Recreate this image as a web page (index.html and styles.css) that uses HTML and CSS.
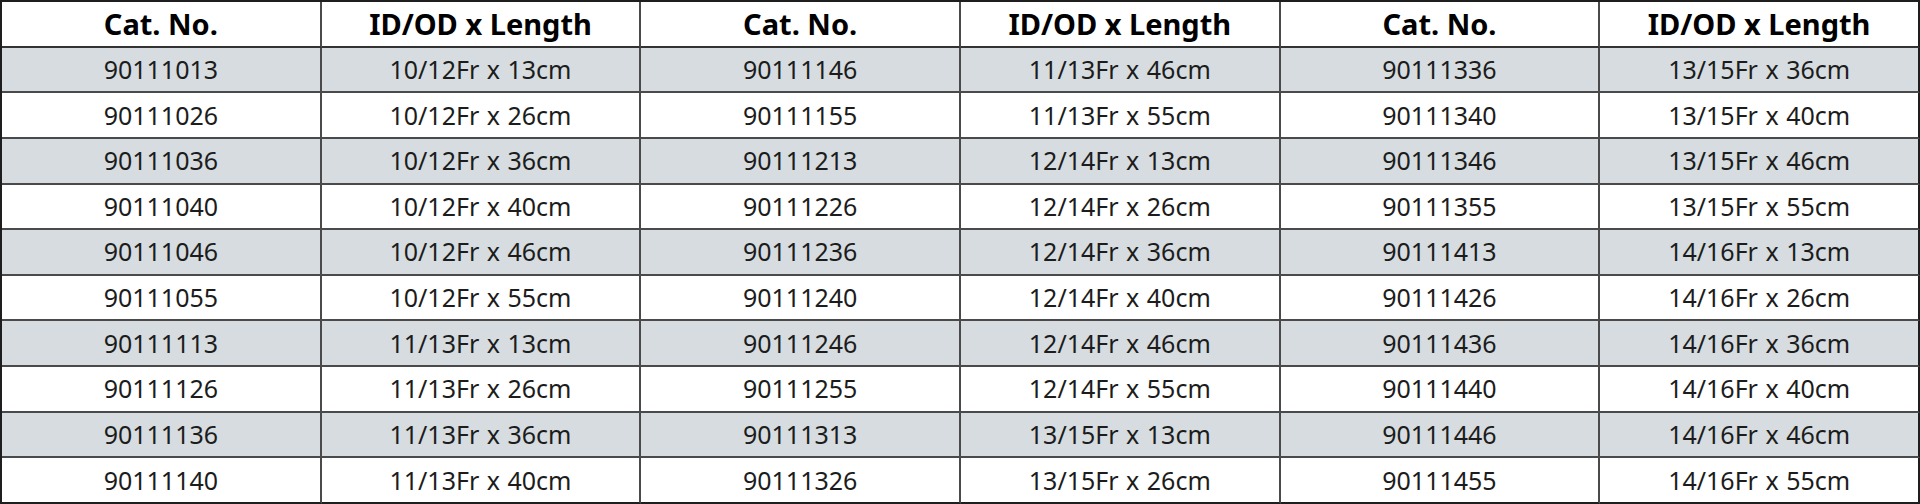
FILE: index.html
```html
<!DOCTYPE html>
<html lang="en">
<head>
<meta charset="utf-8">
<title>Catalog</title>
<link rel="stylesheet" href="styles.css">
</head>
<body>
<table class="cat">
<thead>
<tr><th>Cat. No.</th><th>ID/OD x Length</th><th>Cat. No.</th><th>ID/OD x Length</th><th>Cat. No.</th><th>ID/OD x Length</th></tr>
</thead>
<tbody>
<tr class="alt"><td>90111013</td><td>10/12Fr x 13cm</td><td>90111146</td><td>11/13Fr x 46cm</td><td>90111336</td><td>13/15Fr x 36cm</td></tr>
<tr><td>90111026</td><td>10/12Fr x 26cm</td><td>90111155</td><td>11/13Fr x 55cm</td><td>90111340</td><td>13/15Fr x 40cm</td></tr>
<tr class="alt"><td>90111036</td><td>10/12Fr x 36cm</td><td>90111213</td><td>12/14Fr x 13cm</td><td>90111346</td><td>13/15Fr x 46cm</td></tr>
<tr><td>90111040</td><td>10/12Fr x 40cm</td><td>90111226</td><td>12/14Fr x 26cm</td><td>90111355</td><td>13/15Fr x 55cm</td></tr>
<tr class="alt"><td>90111046</td><td>10/12Fr x 46cm</td><td>90111236</td><td>12/14Fr x 36cm</td><td>90111413</td><td>14/16Fr x 13cm</td></tr>
<tr><td>90111055</td><td>10/12Fr x 55cm</td><td>90111240</td><td>12/14Fr x 40cm</td><td>90111426</td><td>14/16Fr x 26cm</td></tr>
<tr class="alt"><td>90111113</td><td>11/13Fr x 13cm</td><td>90111246</td><td>12/14Fr x 46cm</td><td>90111436</td><td>14/16Fr x 36cm</td></tr>
<tr><td>90111126</td><td>11/13Fr x 26cm</td><td>90111255</td><td>12/14Fr x 55cm</td><td>90111440</td><td>14/16Fr x 40cm</td></tr>
<tr class="alt"><td>90111136</td><td>11/13Fr x 36cm</td><td>90111313</td><td>13/15Fr x 13cm</td><td>90111446</td><td>14/16Fr x 46cm</td></tr>
<tr><td>90111140</td><td>11/13Fr x 40cm</td><td>90111326</td><td>13/15Fr x 26cm</td><td>90111455</td><td>14/16Fr x 55cm</td></tr>
</tbody>
</table>
</body>
</html>
```
FILE: styles.css
```css
html, body {
  margin: 0;
  padding: 0;
  background: #ffffff;
}
.cat {
  width: 1920px;
  height: 504px;
  table-layout: fixed;
  border-collapse: separate;
  border-spacing: 0;
  border-top: 2px solid #1e1e1e;
  border-left: 2px solid #1e1e1e;
  font-family: "Noto Sans", "Open Sans", "Noto Sans CJK KR", sans-serif;
  color: #1c1c1c;
}
.cat tr {
  height: 45.6px;
}
.cat th, .cat td {
  border-right: 2px solid #4a4a4a;
  border-bottom: 2px solid #4a4a4a;
  text-align: center;
  vertical-align: middle;
  padding: 0;
  line-height: 1;
}
.cat th:last-child, .cat td:last-child {
  border-right-color: #1e1e1e;
}
.cat tbody tr:last-child td {
  border-bottom-color: #1e1e1e;
}
.cat th {
  font-size: 29px;
  font-weight: 700;
  color: #000;
  border-bottom-color: #333;
}
.cat td {
  font-size: 25px;
  font-weight: 400;
  word-spacing: 1px;
}
.cat tr.alt td {
  background: #d6dce0;
}
```
